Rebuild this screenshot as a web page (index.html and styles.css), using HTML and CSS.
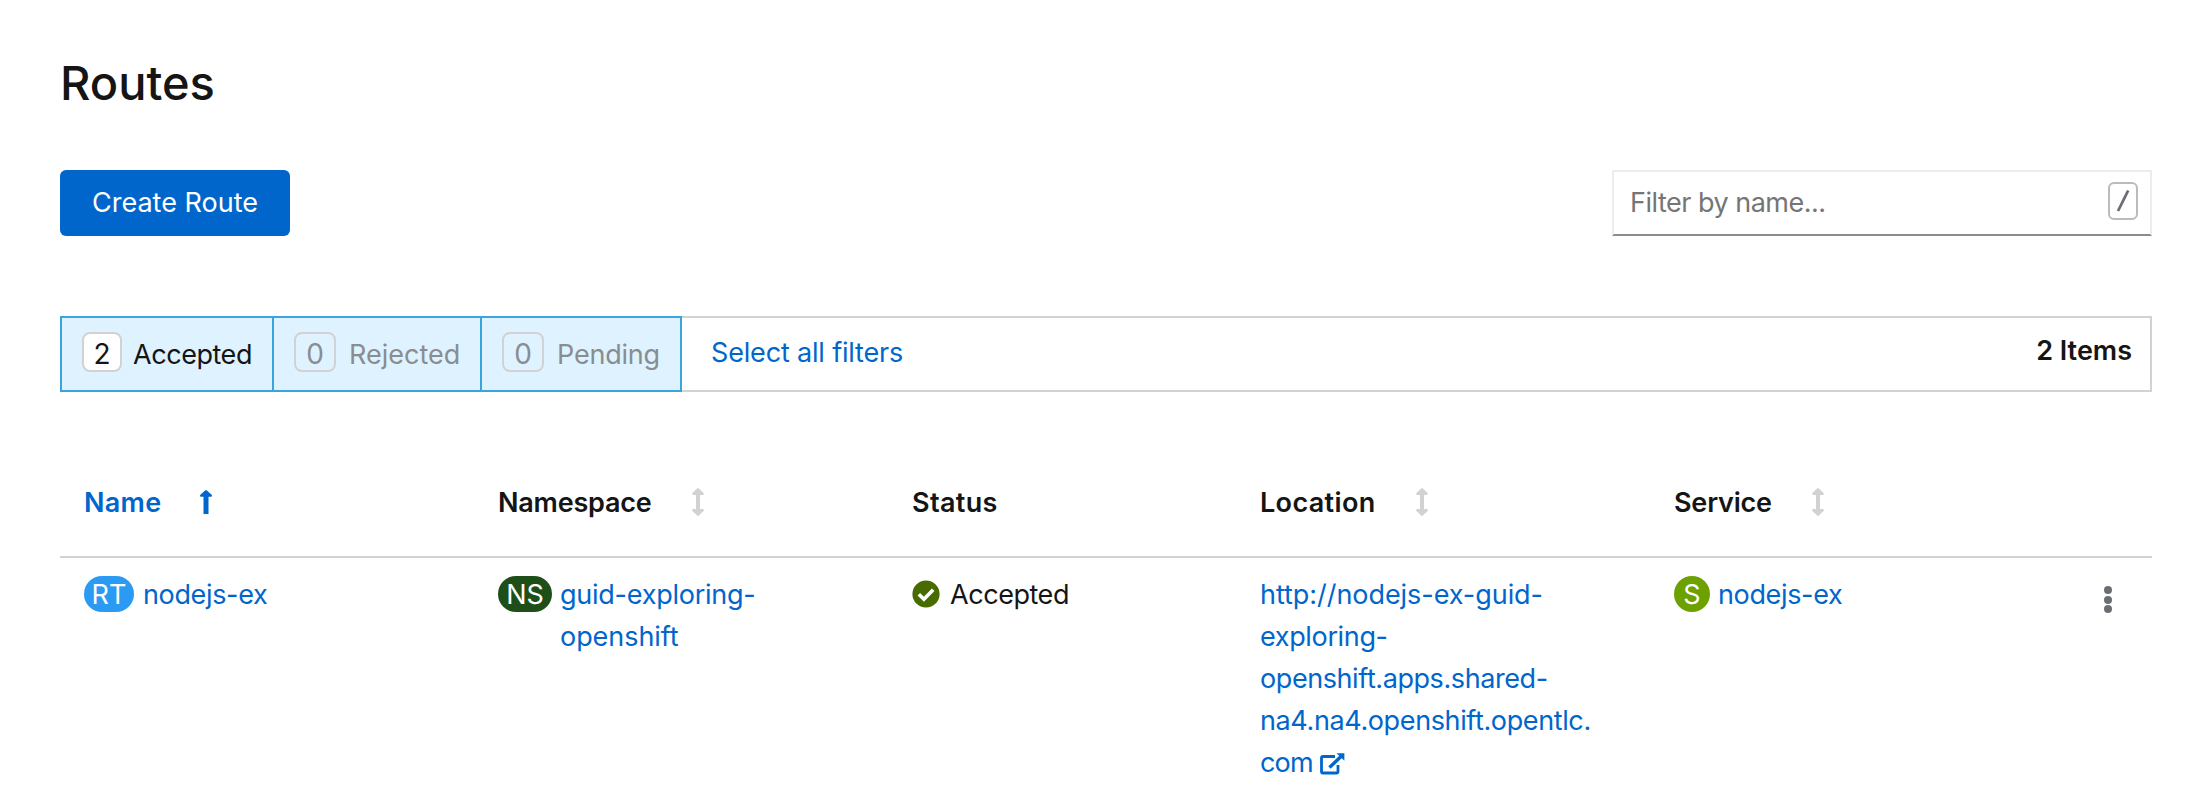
FILE: index.html
```html
<!DOCTYPE html>
<html lang="en">
<head>
<meta charset="utf-8">
<title>Routes</title>
<link rel="stylesheet" href="styles.css">
</head>
<body>
<svg class="sprite" width="0" height="0" aria-hidden="true">
  <symbol id="sort" viewBox="0 0 12 28"><path d="M5.100.5a1.300 1.300 0 0 1 1.800 0l4.600 4.400c.8.9.3 2.100-.8 2.100H8v14h2.700c1.100 0 1.600 1.200.8 2.100l-4.600 4.400a1.300 1.300 0 0 1-1.800 0L.5 23.100C-.3 22.200.2 21 1.300 21H4V7H1.300C.2 7-.3 5.800.5 4.900z"/></symbol>
</svg>
<main class="page">
  <h1 class="title">Routes</h1>
  <div class="toolbar">
    <button class="create">Create Route</button>
    <div class="search"><span class="t t-search">Filter by name...</span><kbd class="key"><svg width="14" height="24" viewBox="0 0 14 24"><path d="M2 22 12.200 1.500"/></svg></kbd></div>
  </div>
  <div class="filters">
    <div class="chip chip-a"><span class="count">2</span><span class="t t-acc">Accepted</span></div>
    <div class="chip chip-r off"><span class="count">0</span><span class="t t-rej">Rejected</span></div>
    <div class="chip chip-p off"><span class="count">0</span><span class="t t-pen">Pending</span></div>
    <a class="all">Select all filters</a>
    <strong class="items">2 Items</strong>
  </div>
  <div class="row head">
    <div class="cell active"><span class="t t-name">Name</span><svg class="arrow up" width="12" height="24" viewBox="0 0 12 24"><path d="M5.100.5a1.300 1.300 0 0 1 1.800 0l4.700 4.300c.8.9.3 1.900-.8 1.900H8.500V24h-5V6.700H1.200C.1 6.700-.4 5.700.4 4.800z"/></svg></div>
    <div class="cell"><span class="t t-ns">Namespace</span><svg class="arrow" width="12" height="28"><use href="#sort"/></svg></div>
    <div class="cell"><span class="t t-status">Status</span></div>
    <div class="cell"><span class="t t-loc">Location</span><svg class="arrow" width="12" height="28"><use href="#sort"/></svg></div>
    <div class="cell"><span class="t t-svc">Service</span><svg class="arrow" width="12" height="28"><use href="#sort"/></svg></div>
  </div>
  <div class="row body">
    <div class="cell"><span class="badge rt">RT</span><a class="t t-node">nodejs-ex</a></div>
    <div class="cell"><span class="badge ns">NS</span><a class="lines"><span class="t t-guid">guid-exploring-</span><span class="t t-open">openshift</span></a></div>
    <div class="cell"><svg class="check" width="28" height="28" viewBox="0 0 28 28"><circle cx="14" cy="14" r="13.600" fill="#486b00"/><path d="M6.800 14.300 11.900 19.200 21.200 9.700" fill="none" stroke="#fff" stroke-width="3.600"/></svg><span class="t t-acc">Accepted</span></div>
    <div class="cell"><a class="lines"><span class="t t-l1">http://nodejs-ex-guid-</span><span class="t t-l2">exploring-</span><span class="t t-l3">openshift.apps.shared-</span><span class="t t-l4">na4.na4.openshift.opentlc.</span><span class="last"><span class="t t-l5">com</span><svg class="ext" width="25" height="22" viewBox="0 0 25 22"><path d="M15 3.500H3Q1.500 3.500 1.500 5V18.500Q1.500 20 3 20H16.500Q18 20 18 18.500V12" fill="none" stroke="#06c" stroke-width="2.800"/><path d="M9.500 14.500 22 2.500" stroke="#06c" stroke-width="3.400"/><path d="M16.500.3H24.400V7.800z" fill="#06c"/></svg></span></a></div>
    <div class="cell"><span class="badge svc">S</span><a class="t t-node">nodejs-ex</a></div>
    <div class="kebab"><i></i><i></i><i></i></div>
  </div>
</main>
</body>
</html>
```
FILE: styles.css
```css
* { box-sizing: border-box; }
body { margin: 0; background: #fff; color: #151515; font: 27px/42px Inter, sans-serif; }
.sprite { position: absolute; }
.page { padding: 55px 58px 0 60px; }
.t { white-space: nowrap; }
.title { margin: 0; height: 115px; font-size: 47px; line-height: 56px; font-weight: 500; }
.toolbar { display: flex; justify-content: space-between; height: 66px; }
.create { width: 230px; height: 66px; padding: 0; border: 0; border-radius: 6px; background: #06c; color: #fff; font: inherit; }
.search { display: flex; justify-content: space-between; width: 540px; padding: 10px 12px 0 16px; border: 2px solid #ededed; border-bottom-color: #8a8d90; color: #757575; }
.key { display: flex; flex: none; align-items: center; justify-content: center; width: 30px; height: 38px; border: 2px solid #bbb; border-radius: 6px; }
.key svg { flex: none; fill: none; stroke: #6a6e73; stroke-width: 2.8; }
.filters { display: flex; height: 76px; margin-top: 80px; border: 2px solid #d2d2d2; }
.chip { display: flex; margin: -2px 0 -2px -2px; height: 76px; padding: 14px 0 0 20px; border: 2px solid #39a5dc; background: #def3ff; }
.chip .t { padding-top: 2px; }
.chip-a { width: 214px; }
.chip-r { width: 210px; }
.chip-p { width: 202px; }
.off { color: #8a8d90; }
.count { width: 42px; height: 40px; margin-right: 13px; border: 2px solid #d2d2d2; border-radius: 8px; text-align: center; font-size: 28px; line-height: 41px; }
.chip-a .count { width: 40px; margin-right: 11px; background: #fff; }
.all { margin: 14px auto 0 29px; color: #06c; letter-spacing: -.17px; }
.items { margin: 12px 18px 0 0; font-weight: 600; }
.row { display: grid; grid-template-columns: 414px 414px 348px 414px 364px 1fr; }
.head { height: 166px; border-bottom: 2px solid #d2d2d2; font-weight: 600; }
.head .cell { height: 42px; margin-top: 89px; align-items: center; }
.head .t { padding-top: 2px; }
.cell { display: flex; padding-left: 24px; }
.active { color: #06c; }
.arrow { margin-left: 40px; fill: #d2d2d2; }
.up { margin-left: 39px; fill: #06c; }
.body { padding-top: 16px; }
.body a { color: #06c; }
.badge { width: 50px; height: 36px; margin: 2px 9px 0 0; border-radius: 18px; color: #fff; text-align: center; line-height: 37px; }
.rt { background: #2b9af3; }
.ns { width: 54px; margin-right: 8px; background: #1e4f18; }
.svc { width: 36px; margin-right: 8px; background: #6ca100; }
.lines { display: flex; flex-direction: column; align-items: flex-start; }
.check { margin: 6px 10px 0 0; }
.last { display: flex; }
.ext { margin: 11px 0 0 7px; }
.kebab { display: flex; flex-direction: column; gap: 1.6px; align-items: center; padding: 12px 0 0 64px; width: 124px; }
.kebab i { width: 8px; height: 8px; border-radius: 50%; background: #6a6e73; }

/* Tracking per label */
.t-search { letter-spacing: -.5px; }
.t-acc { letter-spacing: -.45px; }
.t-rej { letter-spacing: 0; }
.t-pen { letter-spacing: -.2px; }
.t-name { letter-spacing: .3px; }
.t-ns, .t-svc { letter-spacing: -.2px; }
.t-status, .t-loc { letter-spacing: .35px; }
.t-node { letter-spacing: -.35px; }
.t-guid { letter-spacing: -.25px; }
.t-open, .t-l1 { letter-spacing: -.05px; }
.t-l2 { letter-spacing: -.35px; }
.t-l3 { letter-spacing: -.42px; }
.t-l4 { letter-spacing: -.38px; }
.t-l5 { letter-spacing: -.8px; }
```
